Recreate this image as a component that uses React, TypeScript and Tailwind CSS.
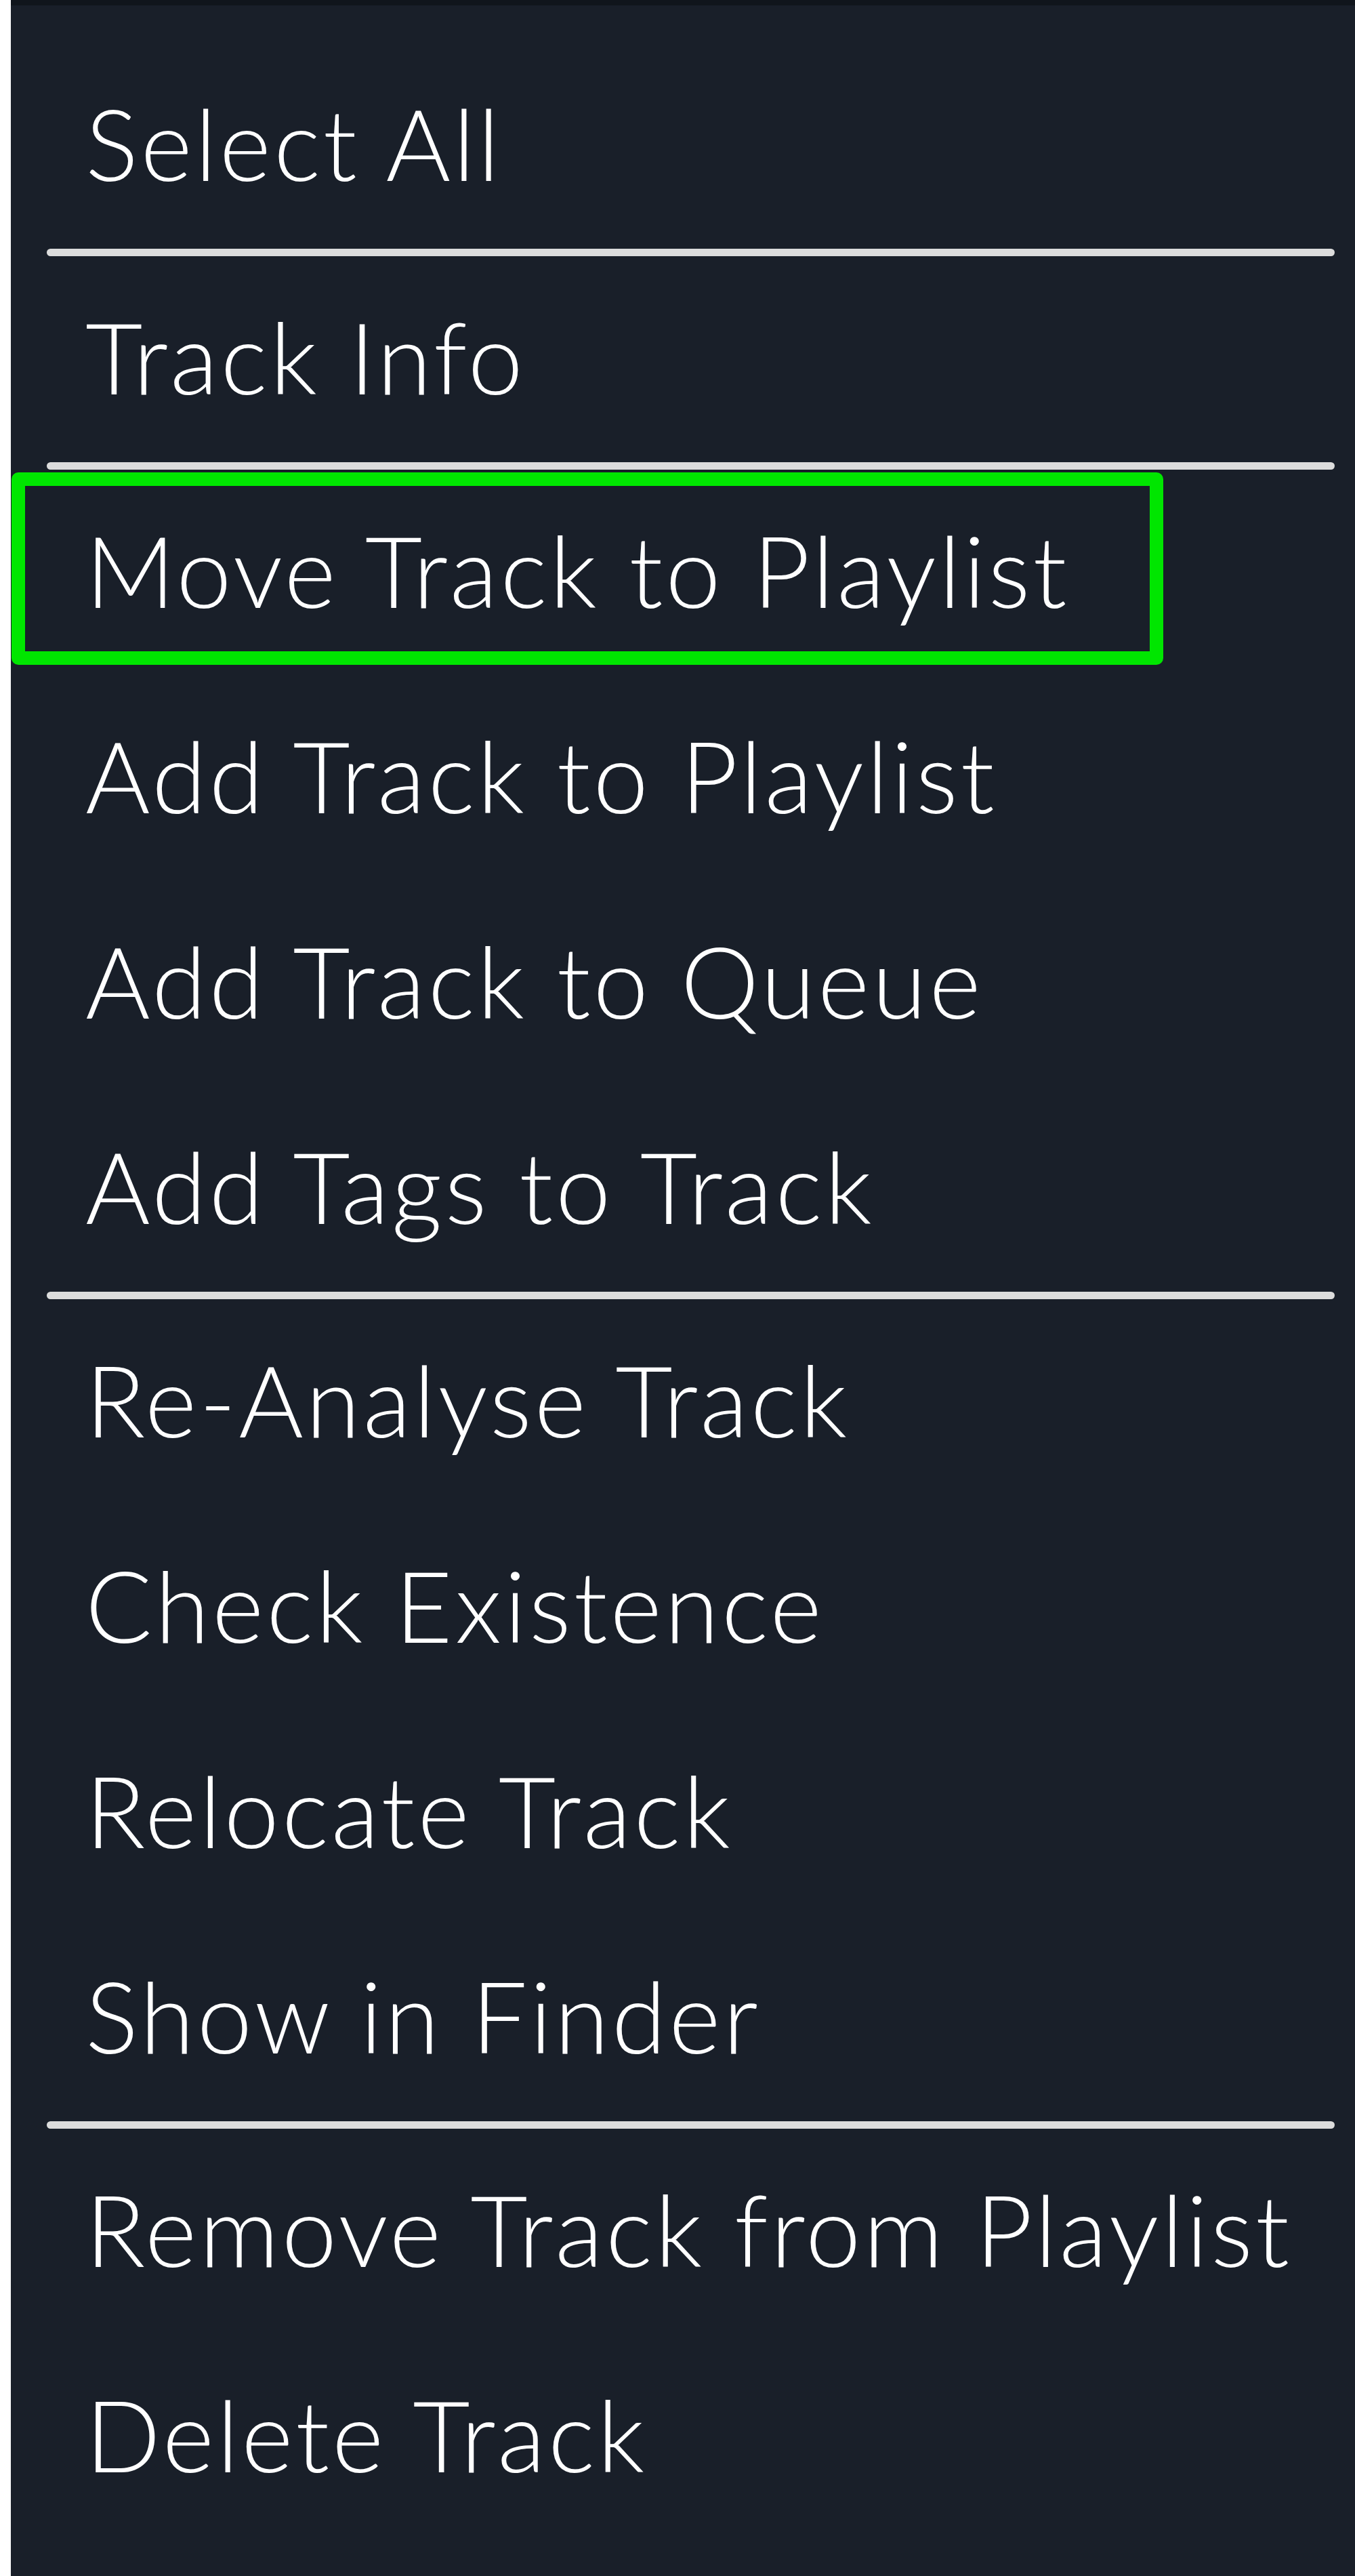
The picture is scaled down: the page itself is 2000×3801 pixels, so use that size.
import { Fragment } from 'react'

type Item = { label: string; focused?: boolean }

// groups of menu items, a rule is drawn between each group
const groups: Item[][] = [
  [{ label: 'Select All' }],
  [{ label: 'Track Info' }],
  [
    { label: 'Move Track to Playlist', focused: true },
    { label: 'Add Track to Playlist' },
    { label: 'Add Track to Queue' },
    { label: 'Add Tags to Track' },
  ],
  [
    { label: 'Re-Analyse Track' },
    { label: 'Check Existence' },
    { label: 'Relocate Track' },
    { label: 'Show in Finder' },
  ],
  [{ label: 'Remove Track from Playlist' }, { label: 'Delete Track' }],
]

function MenuItem({ item }: { item: Item }) {
  return (
    <div className="relative h-[303px] flex items-center pl-[110px]">
      {item.focused && (
        <span className="absolute left-[1px] top-[4px] w-[1700px] h-[284px] border-[20px] border-[#00e600] rounded-[10px]" />
      )}
      <span className="relative -top-[4px] text-[146px] leading-none font-light tracking-[4px] text-white whitespace-nowrap">
        {item.label}
      </span>
    </div>
  )
}

export default function App() {
  return (
    <div className="flex w-full min-h-[3801px] bg-[#191f29]" style={{ fontFamily: 'Lato, "Open Sans", sans-serif' }}>
      <div className="w-[16px] shrink-0 bg-white" />
      <div className="flex-1 flex flex-col">
        <div className="h-[8px] bg-[#10151c]" />
        <div className="pt-[55px] pb-[41px] flex flex-col">
          {groups.map((group, gi) => (
            <Fragment key={gi}>
              {gi > 0 && (
                <div className="h-[12px] flex items-center pl-[53px] pr-[30px]">
                  <div className="w-full h-[11px] rounded-full bg-[#dcdcdc]" />
                </div>
              )}
              {group.map(item => (
                <MenuItem key={item.label} item={item} />
              ))}
            </Fragment>
          ))}
        </div>
      </div>
    </div>
  )
}
